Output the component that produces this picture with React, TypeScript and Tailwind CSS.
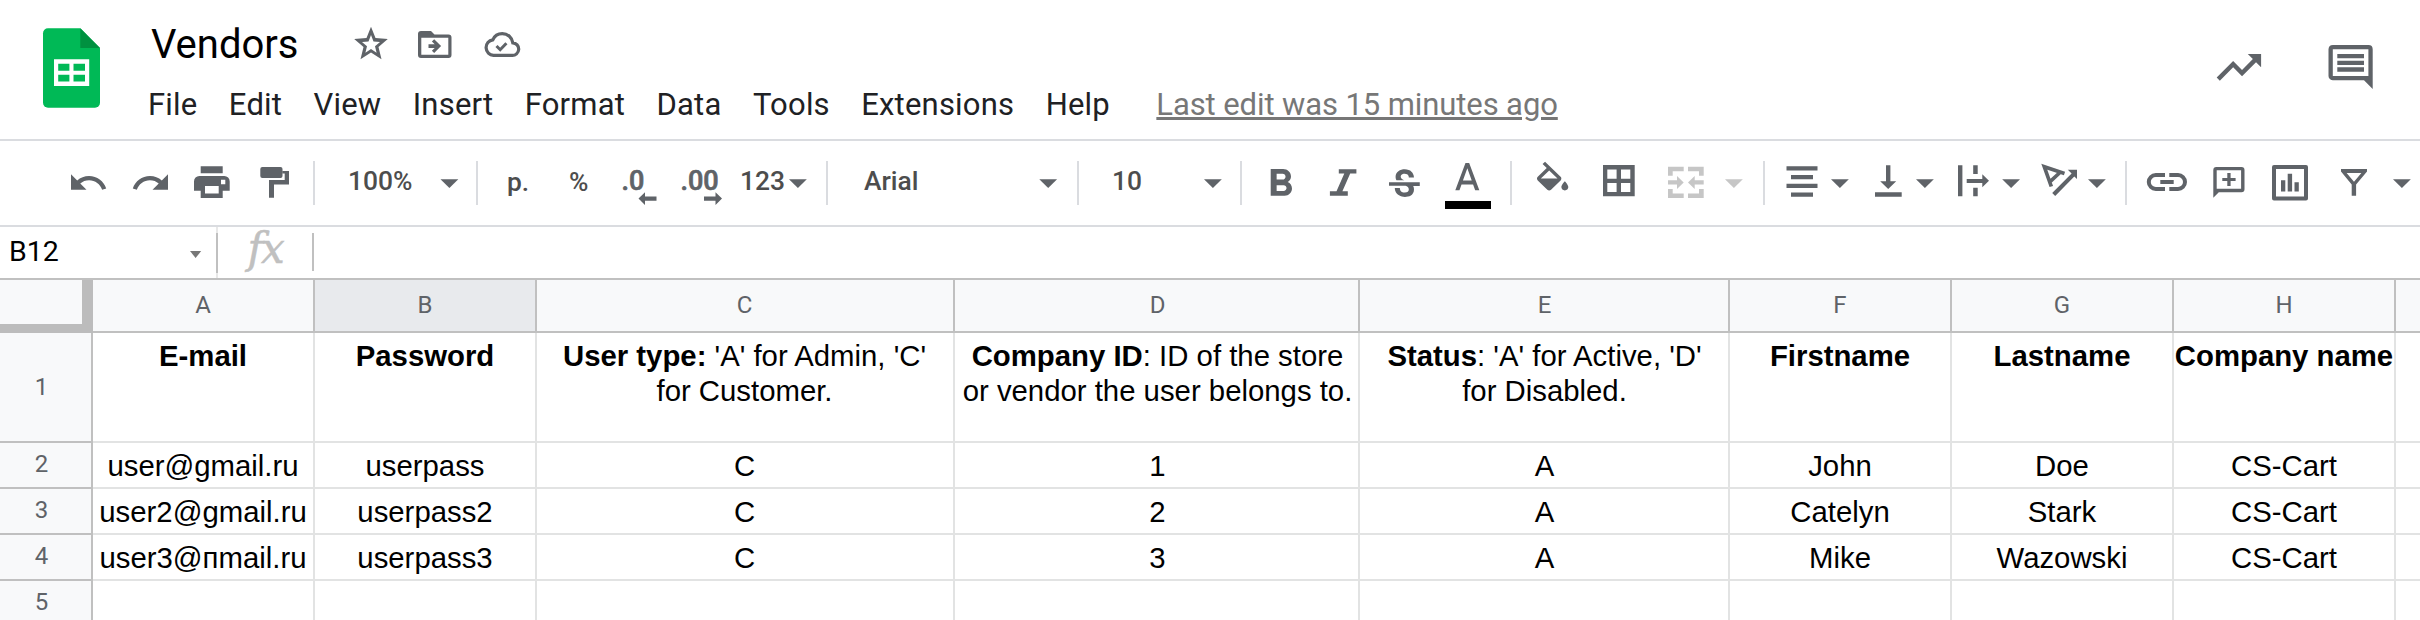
import React from "react";

type Kids = { children?: React.ReactNode };

/** Icon cell. Drawings inside use window x coordinates, so the cell only needs its left edge and width. */
function Cell({ x, w, y = 0, h = 44, color = "text-[#5f6368]", children }: Kids & { x: number; w: number; y?: number; h?: number; color?: string }) {
  return (
    <svg width={w} height={h} viewBox={`${x} ${y} ${w} ${h}`} fill="currentColor" className={`block shrink-0 overflow-visible ${color}`} aria-hidden="true">
      {children}
    </svg>
  );
}

/** Places a 24-unit icon path so that its point (ox, oy) lands on (x, y). */
function Glyph({ d, x, y, ox, oy, sx, sy = sx }: { d: string; x: number; y: number; ox: number; oy: number; sx: number; sy?: number }) {
  return <path fillRule="evenodd" d={d} transform={`translate(${x - ox * sx} ${y - oy * sy}) scale(${sx} ${sy})`} />;
}

const Caret = ({ x }: { x: number }) => <path d={`M${x} 18.3h17.8l-8.9 8.8z`} />;
const Sep = () => <div className="h-11 w-0.5 shrink-0 bg-[#dadce0]" />;

const Label = ({ className, children }: Kids & { className: string }) => (
  <div className={`h-11 shrink-0 whitespace-nowrap text-[26.4px] leading-[40px] font-medium text-[#4d4d4d] ${className}`}>{children}</div>
);

const MENU = ["File", "Edit", "View", "Insert", "Format", "Data", "Tools", "Extensions", "Help"];

function Header() {
  return (
    <header className="flex h-[141px] shrink-0 border-b-2 border-[#dadce0]">
      <Cell x={0} w={148} h={139}>
        <path fill="#00b956" d="M48 28.3H80.3L100 48v54.7a5 5 0 0 1-5 5H48a5 5 0 0 1-5-5V33.300a5 5 0 0 1 5-5z" />
        <path fill="#009140" d="M80.300 28.300 100 48H80.300z" />
        <path fill="#fff" fillRule="evenodd" d="M54 59.300h35.200V86H54zM58.200 63.700v7h11.200v-7zM73.500 63.700v7H85v-7zM58.200 74.700v6.700h11.200v-6.700zM73.500 74.700v6.700H85v-6.700z" />
      </Cell>
      <div className="grow pt-[22px]">
        <div className="flex h-[46px]">
          <div className="w-[192px] pl-[3px] text-[40px] leading-[46px] text-black">Vendors</div>
          <Cell x={340} w={60} y={22} h={46}>
            <path fillRule="evenodd" d="M371 26.700l4.500 11.300 12.300.900-9.300 8 3 12.400L371 52.500l-10.500 6.800 3-12.400-9.300-8 12.300-.900zM371 35l-2.500 6.400-6.500.5 5 4.300-1.600 6.500 5.600-3.600 5.600 3.600-1.600-6.500 5-4.300-6.500-.5z" />
          </Cell>
          <Cell x={400} w={68} y={22} h={46}>
            <path fillRule="evenodd" d="M421 31h10l3.500 3.500H448.500a3 3 0 0 1 3 3V55a3 3 0 0 1-3 3H421a3 3 0 0 1-3-3V34a3 3 0 0 1 3-3zM421.300 37.800V54.700H448.300V37.800z" />
            <path d="M428.500 44.300h6.200l-2.800-2.800 2.300-2.300 6.900 6.900-6.900 6.900-2.300-2.300 2.800-2.800h-6.200z" />
          </Cell>
          <Cell x={468} w={80} y={22} h={46}>
            <path fill="none" stroke="currentColor" strokeWidth="3.200" d="M493.500 55.400h18.500a6.200 6.200 0 0 0 .8-12.600c-.7-5.300-5-9.200-10.500-9.200-4.400 0-7.900 2.500-9.500 6.200a7.850 7.850 0 0 0 .7 15.600z" />
            <path fill="none" stroke="currentColor" strokeWidth="3" d="M496.500 46l3.700 3.700 6.200-6.500" />
          </Cell>
        </div>
        <nav className="mt-[19px] flex text-[31px] leading-[35px] tracking-[0.2px] text-[#202124]">
          {MENU.map((m) => (
            <span key={m} className="mr-[31.4px]">{m}</span>
          ))}
          <span className="ml-[15px] tracking-[-0.1px] text-[#777777] underline decoration-[3px] underline-offset-[2px]">Last edit was 15 minutes ago</span>
        </nav>
      </div>
      <Cell x={2200} w={220} h={139}>
        <Glyph d="M16 6l2.290 2.290-4.880 4.880-4-4L2 16.590 3.410 18l6-6 4 4 6.300-6.290L22 12V6z" x={2216.700} y={54} ox={2} oy={6} sx={2.220} />
        <path fillRule="evenodd" d="M2333 45h35.500a4.300 4.300 0 0 1 4.200 4.300V89l-8.700-8.700H2333a4.500 4.500 0 0 1-4.500-4.400V49.300A4.500 4.500 0 0 1 2333 45zM2332.800 49.300V76h35.600V49.300zM2337.300 54h26.700v4.300h-26.700zM2337.300 60.700h26.700V65h-26.700zM2337.300 67.300h26.700v4.400h-26.700z" />
      </Cell>
    </header>
  );
}

function Toolbar() {
  return (
    <div className="flex h-[86px] shrink-0 border-b-2 border-[#dadce0] pt-5 pl-[60px]">
      <Cell x={60} w={60}>
        <Glyph d="M12.500 8c-2.650 0-5.050.990-6.900 2.600L2 7v9h9l-3.620-3.620c1.390-1.160 3.160-1.880 5.120-1.880 3.540 0 6.550 2.310 7.600 5.500l2.370-.780C21.080 11.030 17.150 8 12.500 8z" x={71} y={13.300} ox={2} oy={7} sx={1.720} />
      </Cell>
      <Cell x={120} w={60}>
        <Glyph d="M18.400 10.600C16.550 8.990 14.150 8 11.500 8c-4.650 0-8.580 3.030-9.960 7.220L3.900 16c1.050-3.190 4.050-5.500 7.600-5.500 1.950 0 3.730.720 5.120 1.880L13 16h9V7l-3.600 3.600z" x={168} y={13.300} ox={22} oy={7} sx={1.720} />
      </Cell>
      <Cell x={180} w={64}>
        <path fillRule="evenodd" d="M200.700 5.300h22v7h-22zM199.300 15h25a5.400 5.400 0 0 1 5.400 5.400V29.700h-7V37h-22V29.700h-6.700V20.400a5.400 5.400 0 0 1 5.300-5.400zM205 25v7.500h13.700V25zM221 18.700v4.600h4.300v-4.600z" />
      </Cell>
      <Cell x={244} w={69}>
        <rect x="260.300" y="6" width="22.200" height="11" rx="2" />
        <path d="M282.300 10H289v13.400h-15v13.400h-5V19h15.700v-6.500h-2.400z" />
      </Cell>
      <Sep />
      <Label className="w-[115px] pl-[33px]">100%</Label>
      <Cell x={430} w={46}><Caret x={440.500} /></Cell>
      <Sep />
      <Label className="w-[91px] pt-px pl-[29px]">p.</Label>
      <Label className="w-[46px] pt-px">%</Label>
      <Cell x={615} w={60}>
        <text x="621.500" y="29" stroke="currentColor" strokeWidth="0.700" className="text-[27px] font-medium">.0</text>
        <path d="M638.500 37.500l6.500-6.300v4.200h11.500v4.300H645v4.200z" />
      </Cell>
      <Cell x={675} w={65}>
        <text x="680.500" y="29" stroke="currentColor" strokeWidth="0.700" className="text-[27px] font-medium">.00</text>
        <path d="M722 37.500l-6.500-6.300v4.200H704v4.300h11.500v4.200z" />
      </Cell>
      <Label className="w-[46px]">123</Label>
      <Cell x={786} w={40}><Caret x={789} /></Cell>
      <Sep />
      <Label className="w-[202px] pl-[36px]">Arial</Label>
      <Cell x={1030} w={47}><Caret x={1039.300} /></Cell>
      <Sep />
      <Label className="w-[111px] pl-[33px]">10</Label>
      <Cell x={1190} w={50}><Caret x={1204} /></Cell>
      <Sep />
      <Cell x={1242} w={68}>
        <Glyph d="M15.600 10.790c.970-.670 1.650-1.770 1.650-2.790 0-2.260-1.750-4-4-4H7v14h7.040c2.090 0 3.710-1.700 3.710-3.790 0-1.520-.860-2.820-2.150-3.420zM10 6.500h3c.830 0 1.500.670 1.500 1.500s-.670 1.500-1.500 1.500h-3v-3zm3.500 9H10v-3h3.500c.830 0 1.500.670 1.500 1.500s-.670 1.500-1.500 1.500z" x={1270.700} y={8} ox={7} oy={4} sx={1.980} sy={1.910} />
      </Cell>
      <Cell x={1310} w={60}>
        <path d="M1338.800 8.300h17.600v4.200h-6.200l-7.800 17.800h5.400v4.400h-17.900v-4.400h6.600l7.800-17.800h-5.500z" />
      </Cell>
      <Cell x={1370} w={70}>
        <Glyph d="M6.850 7.080C6.850 4.370 9.450 3 12.240 3c1.640 0 3 .490 3.900 1.280.770.650 1.460 1.730 1.460 3.240h-3.010c0-.310-.050-.590-.150-.850-.290-.860-1.200-1.280-2.250-1.280-1.860 0-2.340 1.020-2.340 1.700 0 .480.250.880.740 1.210.380.250.770.480 1.410.700H7.390c-.210-.340-.540-.890-.540-1.920zM21 12v-2H3v2h9.620c1.150.450 1.960.750 1.960 1.970 0 1-.810 1.670-2.280 1.670-1.540 0-2.930-.540-2.930-2.510H6.400c0 .550.080 1.130.240 1.580.810 2.290 3.290 3.300 5.670 3.300 2.270 0 5.300-.890 5.300-4.050 0-.300-.010-1.160-.480-1.940H21V12z" x={1389} y={8.300} ox={3} oy={3} sx={1.710} sy={1.840} />
      </Cell>
      <Cell x={1440} w={70}>
        <Glyph d="M11 2L5.500 16h2.250l1.120-3h6.250l1.120 3h2.250L13 2h-2zm-1.380 9L12 4.670 14.380 11H9.620z" x={1455.300} y={2} ox={5.500} oy={2} sx={1.850} sy={1.950} />
        <rect x="1445" y="40" width="46" height="8" fill="#000" />
      </Cell>
      <Sep />
      <Cell x={1512} w={76}>
        <Glyph d="M16.560 8.940L7.620 0 6.210 1.410l2.380 2.380-5.150 5.150c-.590.590-.590 1.540 0 2.120l5.500 5.500c.290.290.680.440 1.060.440s.770-.150 1.060-.440l5.500-5.500c.590-.580.590-1.530 0-2.120zM5.210 10L10 5.210 14.790 10H5.210zM19 11.500s-2 2.170-2 3.500c0 1.100.900 2 2 2s2-.900 2-2c0-1.330-2-3.500-2-3.500z" x={1537} y={0.700} ox={3} oy={0} sx={1.740} sy={1.690} />
      </Cell>
      <Cell x={1588} w={64}>
        <path fillRule="evenodd" d="M1603 4h31.700v31.300H1603zM1607.300 8.500v9.300h9.300V8.500zM1621 8.500v9.300h9.300V8.500zM1607.300 22v9h9.300v-9zM1621 22v9h9.300v-9z" />
      </Cell>
      <Cell x={1652} w={111} color="text-[#c6c6c6]">
        <path d="M1668 5.700h15.700v4.600h-11v4.500H1668zM1703.700 5.700H1688v4.600h11v4.500h4.700zM1668 37h15.700v-4.600h-11V28H1668zM1703.700 37H1688v-4.600h11V28h4.700zM1668 19.300h9V15l6.700 6.500-6.700 6.500v-4.400h-9zM1703.700 19.300h-9V15l-6.700 6.500 6.700 6.500v-4.400h9z" />
        <Caret x={1725} />
      </Cell>
      <Sep />
      <Cell x={1765} w={95}>
        <path d="M1786.500 5.200h31v4.400h-31zM1791 14h22v4.200h-22zM1786.500 22.800h31V27h-31zM1791 31.500h22v4.200h-22z" />
        <Caret x={1831} />
      </Cell>
      <Cell x={1860} w={85}>
        <path d="M1875 31.200h26.700v4.600H1875zM1886 4.300h4.400v16h5.800l-8 7.700-8-7.700h5.800z" />
        <Caret x={1916} />
      </Cell>
      <Cell x={1945} w={85}>
        <path d="M1958 4.200h4.400v31h-4.400zM1973.200 4.200h4.500v8.800h-4.500zM1973.200 26.700h4.500v8.500h-4.500zM1966.700 18h15.600v-4.700l6.700 6.500-6.700 6.500V22h-15.600z" />
        <Caret x={2002.200} />
      </Cell>
      <Cell x={2030} w={95}>
        <path fill="none" stroke="currentColor" strokeWidth="3.700" d="M2064.500 12.500L2044.300 5.800l7 19.700M2060.500 11l-11.500 10.700" />
        <path d="M2052.200 32l19.400-19.400-3.800-3.800h9.200V18l-2.700-2.500-19.100 19.600z" />
        <Caret x={2088} />
      </Cell>
      <Sep />
      <Cell x={2127} w={73}>
        <path fill="none" stroke="currentColor" strokeWidth="4" d="M2165 14h-9.200a7 7 0 0 0 0 14h9.200M2169.300 14h8.700a7 7 0 0 1 0 14h-8.700" />
        <path d="M2160.300 19h13.400v4h-13.400z" />
      </Cell>
      <Cell x={2200} w={58}>
        <path fillRule="evenodd" d="M2216.300 6h25.200a3 3 0 0 1 3 3v19.300a3 3 0 0 1-3 3h-22.700l-5.500 5.500V9a3 3 0 0 1 3-3zM2216.700 9.300v18.500h24.400V9.300z" />
        <path d="M2227.300 12h3.300v4.900h5v3.200h-5V25h-3.300v-4.900h-5v-3.200h5z" />
      </Cell>
      <Cell x={2258} w={66}>
        <path fillRule="evenodd" d="M2274 4h32a2 2 0 0 1 2 2v31.500a2 2 0 0 1-2 2h-32a2 2 0 0 1-2-2V6a2 2 0 0 1 2-2zM2276 8v27.500h28V8z" />
        <path d="M2281 19.200h4.300v11.200h-4.300zM2287.700 12.700h4.400v17.700h-4.400zM2294.500 21.300h4.300v9.100h-4.300z" />
      </Cell>
      <Cell x={2324} w={96}>
        <path fillRule="evenodd" d="M2341 8h26v2.500l-10.900 13V34.700h-4.400V23.500L2341 10.500zM2346.600 12l7.400 8.700 7.400-8.700z" />
        <Caret x={2393} />
      </Cell>
    </div>
  );
}

function FormulaBar() {
  return (
    <div className="flex h-[53px] shrink-0 border-b-2 border-[#c0c0c0]">
      <div className="w-[160px] pl-[9px] text-[28.5px] leading-[50px] text-black">B12</div>
      <Cell x={160} w={56} y={227} h={51} color="text-[#777777]">
        <path d="M190 251h11.200l-5.600 7z" />
      </Cell>
      <div className="h-[51px] w-0.5 bg-[#e8e8e8] py-1.5">
        <div className="h-10 bg-[#c0c0c0]" />
      </div>
      <Cell x={218} w={94} y={227} h={51} color="text-[#c0c0c0]">
        <text x="247.500" y="262.500" fontStyle="italic" stroke="currentColor" strokeWidth="0.500" className="font-['DejaVu_Serif'] text-[42px] tracking-[-2px]">fx</text>
      </Cell>
      <div className="mt-1.5 h-[38px] w-0.5 bg-[#c0c0c0]" />
    </div>
  );
}

const COLS = [
  { id: "A", w: "w-[222px]" },
  { id: "B", w: "w-[222px]" },
  { id: "C", w: "w-[418px] pr-px" },
  { id: "D", w: "w-[405px] pl-0.5" },
  { id: "E", w: "w-[370px] pl-px" },
  { id: "F", w: "w-[222px]" },
  { id: "G", w: "w-[222px]" },
  { id: "H", w: "w-[222px]" },
  { id: "", w: "w-[24px]" },
];

const TITLES: React.ReactNode[] = [
  <b>E-mail</b>,
  <b>Password</b>,
  <><b>User type:</b> 'A' for Admin, 'C'<br />for Customer.</>,
  <><b>Company ID</b>: ID of the store<br />or vendor the user belongs to.</>,
  <><b>Status</b>: 'A' for Active, 'D'<br />for Disabled.</>,
  <b>Firstname</b>,
  <b>Lastname</b>,
  <b>Company name</b>,
  "",
];

const ROWS: React.ReactNode[][] = [
  TITLES,
  ["user@gmail.ru", "userpass", "C", "1", "A", "John", "Doe", "CS-Cart", ""],
  ["user2@gmail.ru", "userpass2", "C", "2", "A", "Catelyn", "Stark", "CS-Cart", ""],
  ["user3@пmail.ru", "userpass3", "C", "3", "A", "Mike", "Wazowski", "CS-Cart", ""],
  ["", "", "", "", "", "", "", "", ""],
];

function Sheet() {
  return (
    <div className="shrink-0">
      <div className="flex h-[53px]">
        <div className="w-[93px] shrink-0 border-r-[11px] border-b-[9px] border-[#bcbcbc] bg-[#f8f9fa]" />
        {COLS.map((c) => (
          <div key={c.id} className={`shrink-0 border-b-2 border-[#c0c0c0] text-center text-[24px] leading-[51px] text-[#5f6368] ${c.w} ${c.id ? "border-r-2" : ""} ${c.id === "B" ? "bg-[#e8eaed]" : "bg-[#f8f9fa]"}`}>
            {c.id}
          </div>
        ))}
      </div>
      {ROWS.map((row, r) => (
        <div key={r} className={`flex ${r === 0 ? "h-[110px]" : "h-[46px]"}`}>
          <div className={`w-[93px] shrink-0 border-r-2 border-b-2 border-[#c0c0c0] bg-[#f8f9fa] pr-2 text-center text-[24px] text-[#5f6368] ${r === 0 ? "leading-[108px]" : "leading-[42px]"}`}>{r + 1}</div>
          {row.map((v, i) => (
            <div key={i} className={`shrink-0 border-b-2 border-[#e2e3e3] pt-[5px] text-center font-['Liberation_Sans'] text-[29.33px] leading-[35px] whitespace-nowrap text-black ${COLS[i].w} ${COLS[i].id ? "border-r-2" : ""}`}>{v}</div>
          ))}
        </div>
      ))}
    </div>
  );
}

export default function App() {
  return (
    <div className="flex h-[620px] w-[2420px] flex-col overflow-hidden bg-white font-[Roboto,sans-serif]">
      <Header />
      <Toolbar />
      <FormulaBar />
      <Sheet />
    </div>
  );
}
